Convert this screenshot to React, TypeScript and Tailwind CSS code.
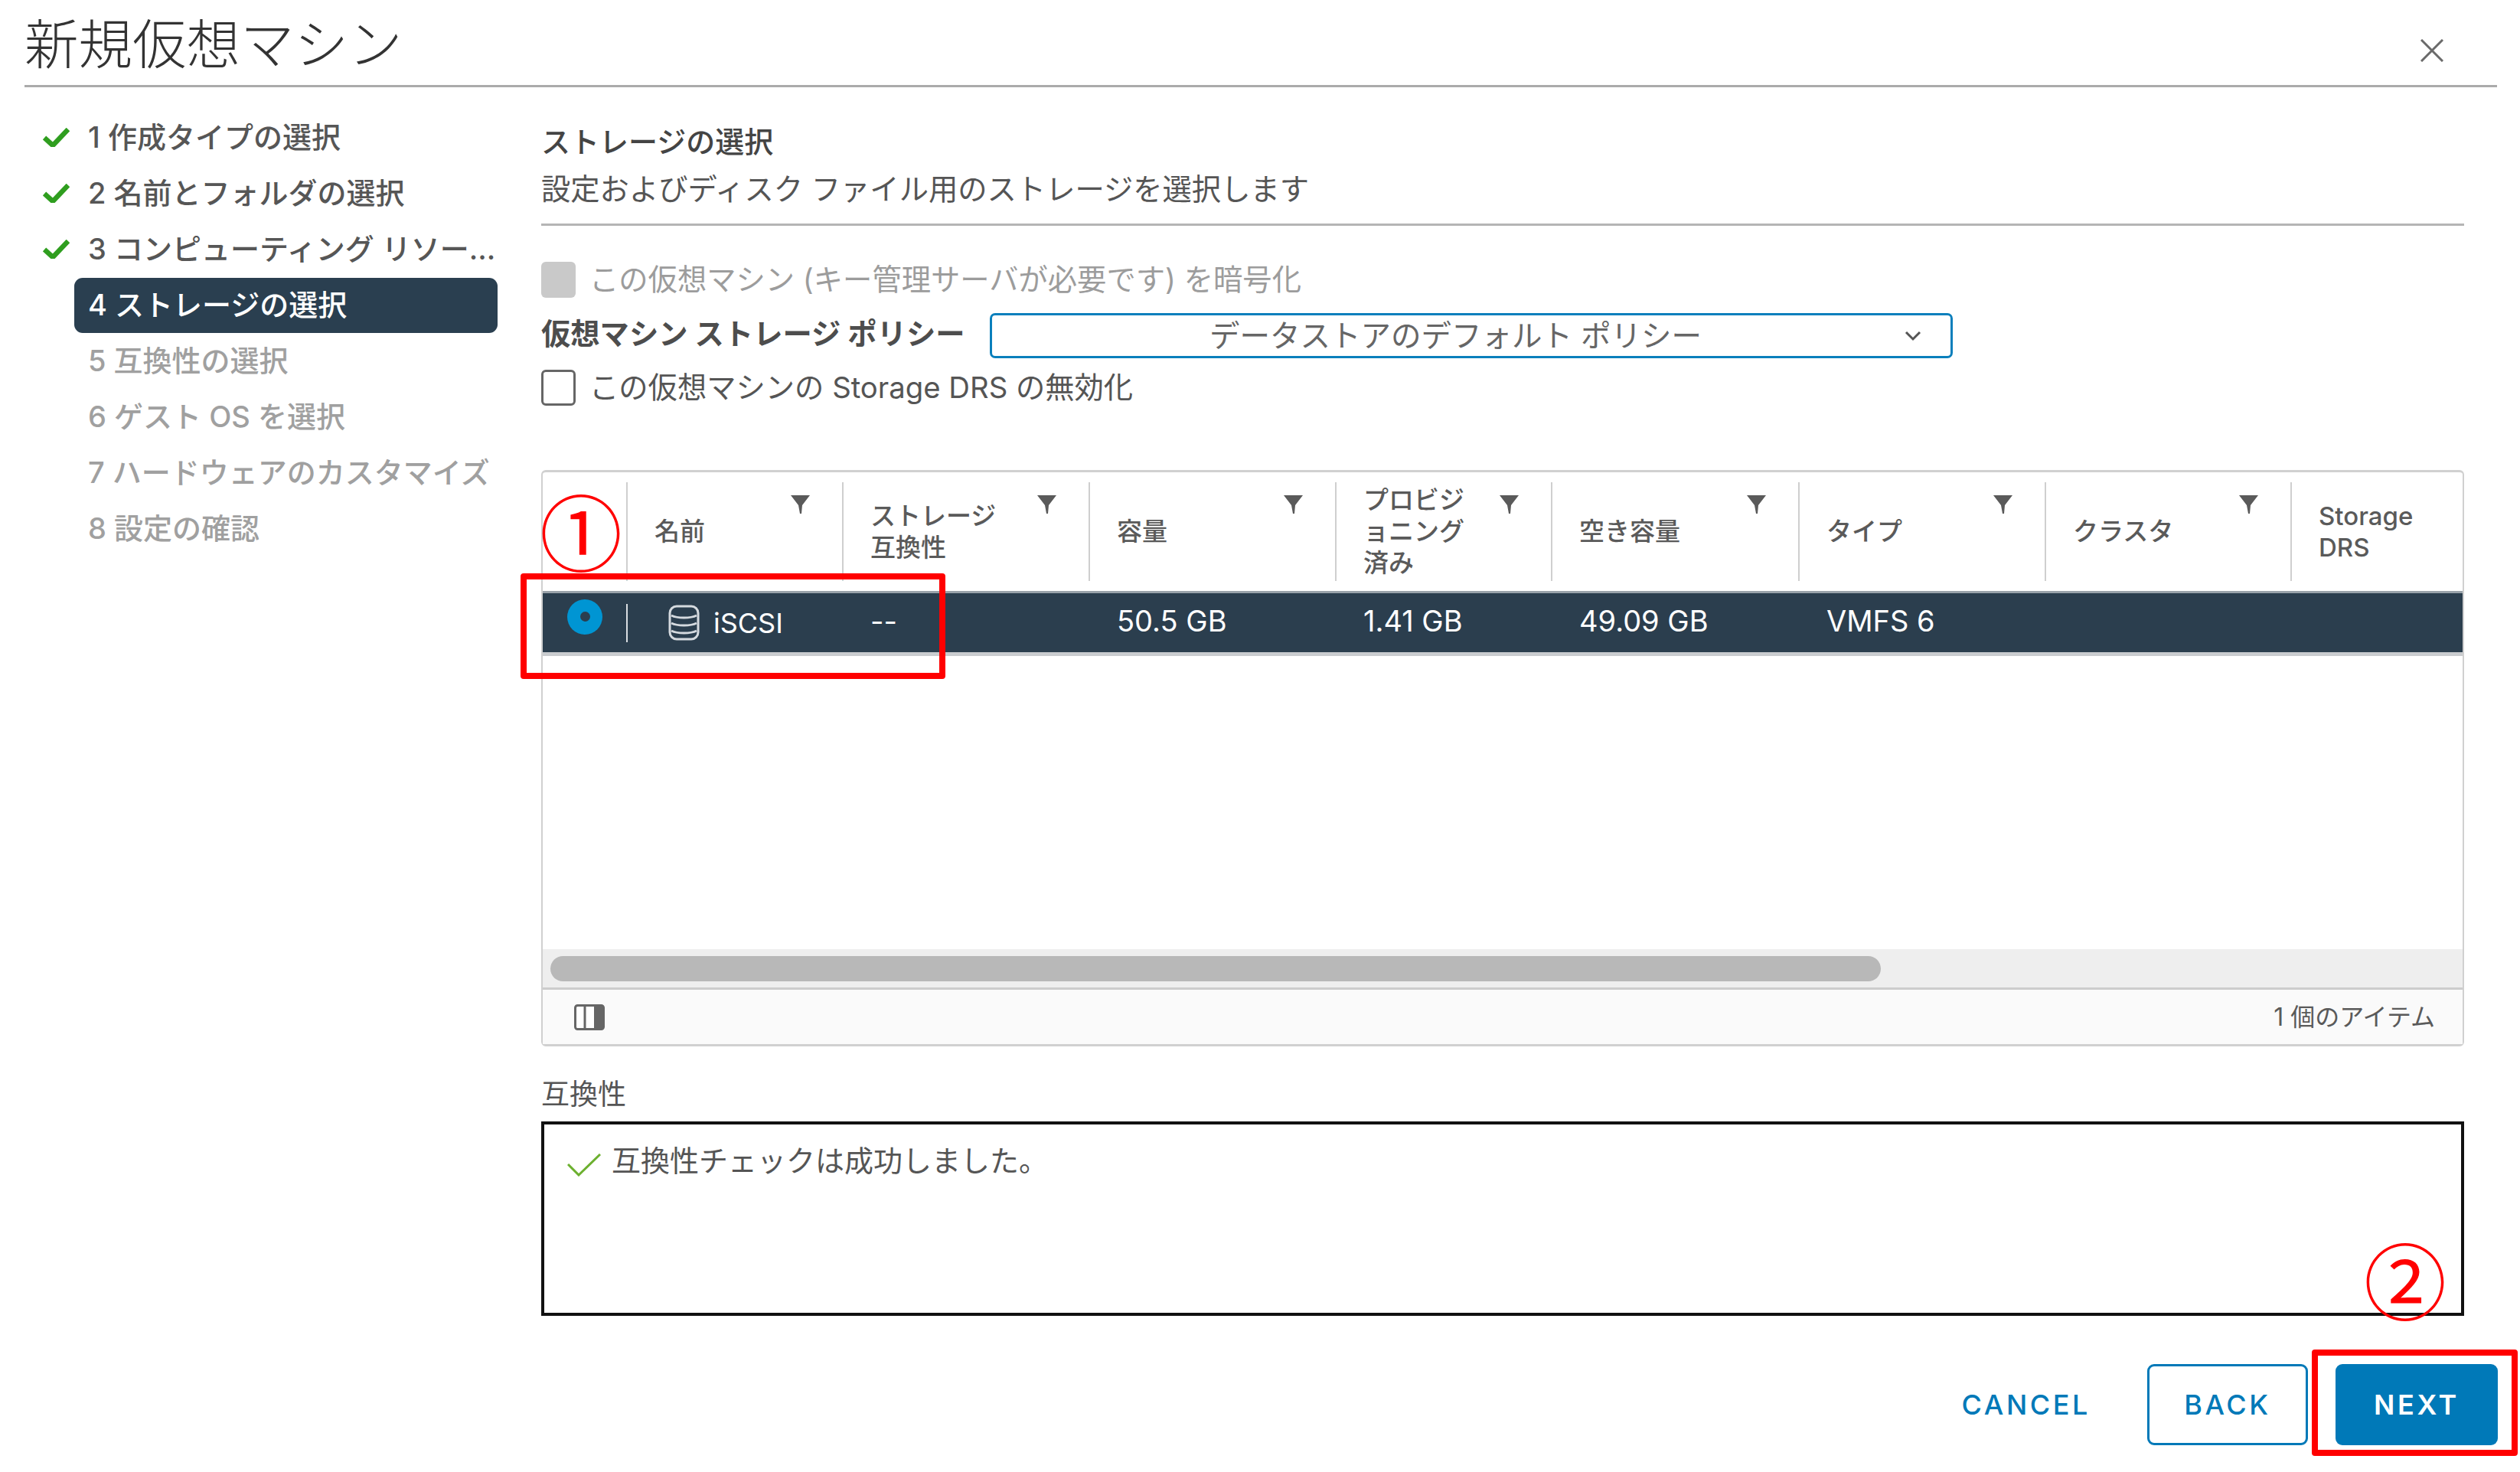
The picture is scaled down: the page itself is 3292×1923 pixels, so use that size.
const steps = [
  { label: "1 作成タイプの選択", state: "done" },
  { label: "2 名前とフォルダの選択", state: "done" },
  { label: "3 コンピューティング リソー...", state: "done" },
  { label: "4 ストレージの選択", state: "active" },
  { label: "5 互換性の選択", state: "todo" },
  { label: "6 ゲスト OS を選択", state: "todo" },
  { label: "7 ハードウェアのカスタマイズ", state: "todo" },
  { label: "8 設定の確認", state: "todo" },
]

const columns = [
  { width: "w-[282px]", lines: ["名前"] },
  { width: "w-[322px]", lines: ["ストレージ", "互換性"] },
  { width: "w-[322px]", lines: ["容量"] },
  { width: "w-[282px]", lines: ["プロビジ", "ョニング", "済み"] },
  { width: "w-[323px]", lines: ["空き容量"] },
  { width: "w-[322px]", lines: ["タイプ"] },
  { width: "w-[321px]", lines: ["クラスタ"] },
]

const StepCheck = () => (
  <svg viewBox="0 0 35 25" className="w-[35px] h-[25px] shrink-0">
    <path d="M2 13 L13 23 L33 2" fill="none" stroke="#2f9e1f" strokeWidth="6.5" />
  </svg>
)

const FilterIcon = () => (
  <svg viewBox="0 0 25 24" className="w-[25px] h-[24px] shrink-0 self-start mt-[17px]">
    <path d="M0 0 H25 L15 13 L14 24 H12 L10 13 Z" fill="#5a5a5a" />
  </svg>
)

const DatabaseIcon = () => (
  <svg viewBox="0 0 41 47" className="w-[41px] h-[47px] shrink-0" fill="none" stroke="#d5dadf" strokeWidth="3">
    <rect x="2" y="2" width="37" height="43" rx="9" />
    <path d="M4 14 C12 18 29 18 37 14" />
    <path d="M4 24 C12 28 29 28 37 24" />
    <path d="M4 34 C12 38 29 38 37 34" />
  </svg>
)

const ColumnsIcon = () => (
  <svg viewBox="0 0 40 34" className="w-[40px] h-[34px]">
    <rect x="1.5" y="1.5" width="37" height="31" rx="3" fill="#fff" stroke="#666" strokeWidth="3" />
    <path d="M14 2 V32" stroke="#666" strokeWidth="3" />
    <path d="M26 2 H36 a2 2 0 0 1 2 2 V30 a2 2 0 0 1 -2 2 H26 Z" fill="#666" />
  </svg>
)

const App = () => {
  return (
    <div className="relative w-[3292px] h-[1923px] overflow-hidden bg-white font-['Inter','Noto_Sans_CJK_JP',sans-serif] text-[#565656]">
      {/* Title */}
      <header className="h-[114px] ml-[32px] mr-[30px] border-b-[3px] border-[#ababab] flex items-center justify-between">
        <h1 className="text-[70.5px] leading-none font-light text-[#333] mt-[8px]">新規仮想マシン</h1>
        <svg viewBox="0 0 30 30" className="w-[30px] h-[30px] mr-[70px] mt-[20px]">
          <path d="M1 1 L29 29 M29 1 L1 29" stroke="#6a6a6a" strokeWidth="3" />
        </svg>
      </header>

      <main className="flex h-[1668px] pl-[56px]">
        {/* Steps */}
        <ul className="w-[594px] shrink-0 pt-[29px]">
          {steps.map((step) => (
            <li key={step.label} className="h-[73px] flex items-center">
              <div className="w-[41px] shrink-0">{step.state === "done" && <StepCheck />}</div>
              <div
                className={`flex-1 min-w-0 h-[72px] pl-[18px] flex items-center rounded-[11px] text-[38px] font-medium whitespace-nowrap ${
                  step.state === "active"
                    ? "bg-[#2a3f50] text-white font-bold"
                    : step.state === "todo"
                      ? "text-[#a0a0a0]"
                      : "text-[#565656]"
                }`}
              >
                {step.label}
              </div>
            </li>
          ))}
        </ul>

        {/* Content */}
        <section className="w-[2512px] ml-[57px] flex flex-col">
          <div className="pt-[46px] pb-[20px] border-b-[3px] border-[#b5b5b5]">
            <h2 className="text-[38px] leading-[50px] font-medium text-[#444]">ストレージの選択</h2>
            <p className="mt-[12px] text-[38.3px] leading-[50px] text-[#555]">
              設定およびディスク ファイル用のストレージを選択します
            </p>
          </div>

          <div className="mt-[47px] flex items-center gap-[18px] h-[47px]">
            <span className="w-[45px] h-[47px] rounded-[6px] bg-[#c9c9c9]" />
            <span className="text-[38.3px] text-[#9c9c9c]">この仮想マシン (キー管理サーバが必要です) を暗号化</span>
          </div>

          <div className="mt-[20px] flex items-center h-[59px]">
            <label className="w-[586px] -mt-[3px] text-[38.3px] font-bold text-[#4d4d4d]">仮想マシン ストレージ ポリシー</label>
            <div className="w-[1258px] h-[59px] pl-[284px] pr-[38px] flex items-center justify-between rounded-[7px] border-[3px] border-[#0a7fbc]">
              <span className="text-[39.5px] text-[#666] mt-[2px]">データストアのデフォルト ポリシー</span>
              <svg viewBox="0 0 22 14" className="w-[22px] h-[14px]">
                <path d="M2 2 L11 11 L20 2" fill="none" stroke="#555" strokeWidth="3" />
              </svg>
            </div>
          </div>

          <div className="mt-[15px] flex items-center gap-[18px] h-[47px]">
            <span className="w-[45px] h-[47px] rounded-[6px] border-[3px] border-[#666] bg-white" />
            <span className="text-[38.3px] text-[#555]">この仮想マシンの Storage DRS の無効化</span>
          </div>

          {/* Datastore table */}
          <div className="mt-[84px] h-[753px] flex flex-col rounded-[6px] border-x-[2px] border-t-[3px] border-b-[3px] border-[#d0d0d0] bg-white">
            <div className="h-[155px] flex shrink-0 py-[13px]">
              <div className="w-[109px] shrink-0" />
              {columns.map((col) => (
                <div
                  key={col.lines[0]}
                  className={`${col.width} shrink-0 border-l-[2px] border-[#cfcfcf] pl-[35px] pr-[42px] flex items-center justify-between`}
                >
                  <div className="text-[33px] leading-[41px] font-medium text-[#5a5a5a]">
                    {col.lines.map((line) => (
                      <div key={line}>{line}</div>
                    ))}
                  </div>
                  <FilterIcon />
                </div>
              ))}
              <div className="flex-1 border-l-[2px] border-[#cfcfcf] pl-[35px] flex items-center text-[33px] leading-[41px] font-medium text-[#5a5a5a]">
                <div>
                  <div>Storage</div>
                  <div>DRS</div>
                </div>
              </div>
            </div>

            <div className="h-[85px] shrink-0 flex items-center bg-[#2b3e4e] border-t-[3px] border-[#9aa3aa] border-b-[5px] border-b-[#c9cccf] text-[38px] text-white">
              <div className="w-[109px] shrink-0 pl-[32px] -mt-[16px]">
                <span className="w-[46px] h-[46px] rounded-full bg-[#0095d3] flex items-center justify-center">
                  <span className="w-[13px] h-[13px] rounded-full bg-[#2b3e4e]" />
                </span>
              </div>
              <div className="w-[282px] shrink-0 h-[50px] border-l-[2px] border-[#d8dde1] pl-[53px] flex items-center gap-[18px] text-[36px]">
                <DatabaseIcon />
                <span>iSCSI</span>
              </div>
              <div className="w-[322px] shrink-0 pl-[37px] -mt-[4px]">--</div>
              <div className="w-[322px] shrink-0 pl-[37px] -mt-[4px]">50.5 GB</div>
              <div className="w-[282px] shrink-0 pl-[37px] -mt-[4px]">1.41 GB</div>
              <div className="w-[323px] shrink-0 pl-[37px] -mt-[4px]">49.09 GB</div>
              <div className="w-[322px] shrink-0 pl-[37px] -mt-[4px]">VMFS 6</div>
            </div>

            <div className="flex-1" />

            <div className="h-[53px] shrink-0 flex items-center bg-[#eeeeee] border-b-[3px] border-[#cccccc] pl-[10px]">
              <div className="w-[1738px] h-[33px] rounded-full bg-[#b8b8b8]" />
            </div>
            <div className="h-[71px] shrink-0 flex items-center justify-between bg-[#fafafa] pl-[41px] pr-[36px]">
              <ColumnsIcon />
              <span className="text-[32px] text-[#5a5a5a]">1 個のアイテム</span>
            </div>
          </div>

          <div className="mt-[38px] text-[37px] leading-[50px] text-[#555]">互換性</div>
          <div className="mt-[10px] h-[254px] border-[4px] border-[#111] pl-[30px] pt-[22px] flex items-start gap-[14px]">
            <svg viewBox="0 0 44 30" className="w-[44px] h-[30px] mt-[16px] shrink-0">
              <path d="M1 14 L15 28 L43 1" fill="none" stroke="#6cb02f" strokeWidth="3" />
            </svg>
            <span className="text-[38px] leading-[50px] text-[#555]">互換性チェックは成功しました。</span>
          </div>
        </section>
      </main>

      {/* Actions */}
      <footer className="flex items-center justify-end pr-[29px]">
        <button className="mr-[74px] text-[36px] font-medium tracking-[0.1em] text-[#0079b8]">CANCEL</button>
        <button className="w-[210px] h-[106px] mr-[36px] rounded-[9px] border-[3px] border-[#0079b8] text-[36px] font-medium tracking-[0.1em] text-[#0079b8]">
          BACK
        </button>
        <button className="w-[212px] h-[106px] rounded-[9px] bg-[#0079b8] text-[36px] font-semibold tracking-[0.1em] text-white">
          NEXT
        </button>
      </footer>

      {/* Red annotations laid over the screenshot */}
      <span className="absolute left-[680px] top-[749px] w-[555px] h-[138px] rounded-[4px] border-[8px] border-[#ff0000]" />
      <span className="absolute left-[3020px] top-[1763px] w-[269px] h-[139px] rounded-[4px] border-[8px] border-[#ff0000]" />
      <span className="absolute left-[702px] top-[628px] w-[114px] h-[126px] flex items-center justify-center text-[108px] leading-none text-[#ff0000] font-['Noto_Sans_CJK_JP',sans-serif]">
        ①
      </span>
      <span className="absolute left-[3085px] top-[1606px] w-[114px] h-[126px] flex items-center justify-center text-[108px] leading-none text-[#ff0000] font-['Noto_Sans_CJK_JP',sans-serif]">
        ②
      </span>
    </div>
  )
}

export default App
